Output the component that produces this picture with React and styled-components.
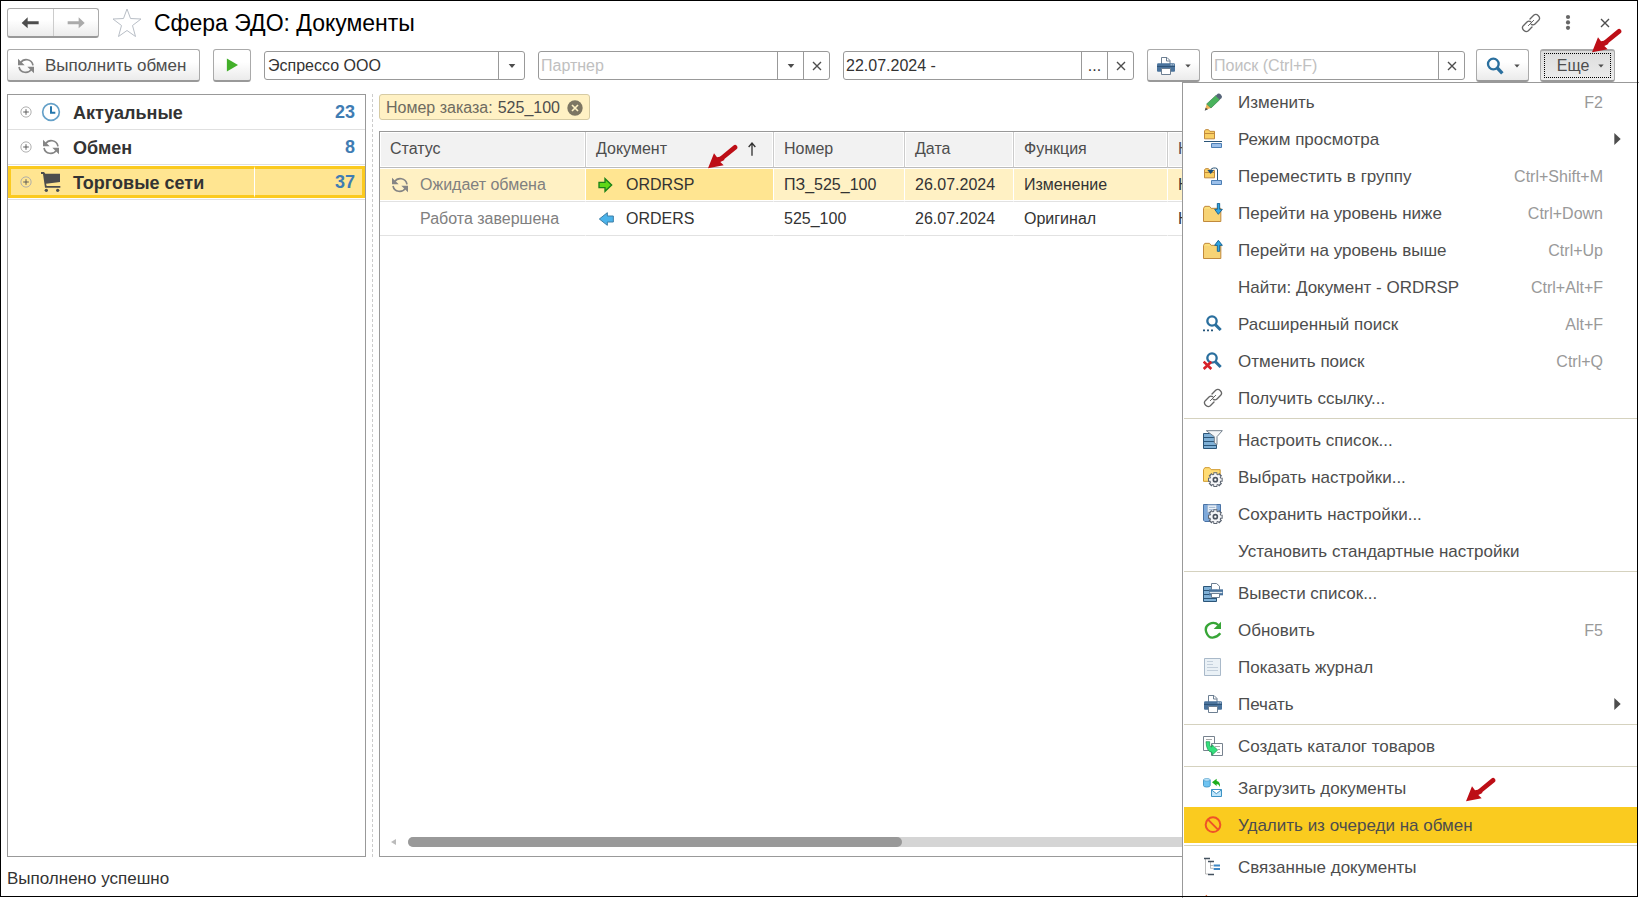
import React from 'react';
import styled, { createGlobalStyle } from 'styled-components';

const GlobalStyle = createGlobalStyle`
    * { box-sizing: border-box; }
    body {
        margin: 0;
        background: #fff;
        color: #333;
        font: 16px/20px "Liberation Sans", Arial, sans-serif;
    }
    button, input, select {
        font: inherit;
        color: inherit;
        margin: 0;
    }
    button {
        padding: 0;
        border: 0;
        background: none;
        cursor: pointer;
    }
    svg { flex-shrink: 0; }
`;

const Icon = ({ name, size = 20 }) => (
    <svg width={size} height={size} viewBox="0 0 60 60" fill="none" aria-hidden="true">
        {icons[name]}
    </svg>
);

const folder = (
    <g>
        <path d="M1.5 16l4-6h14l5 6h29v39.500H1.500z" fill="#f7d375" stroke="#c18a3c" strokeWidth="3" />
        <path d="M4 17l3-5h11l5 6z" fill="#fbe07a" />
    </g>
);
const smallFolder = (
    <path d="M4.5 6l3-4h9l4 5h14v22.500h-30zM5 13.500h29" fill="#f9cf63" stroke="#c18a3c" strokeWidth="3" />
);
const gear = (
    <g>
        <circle cx="37" cy="38" r="18" fill="#5d6571" />
        <path d="M37 16v44M15 38h44M21 22l32 32M53 22L21 54" stroke="#5d6571" strokeWidth="12" />
        <path d="M37 19v38M18 38h38M24 25l26 26M50 25L24 51" stroke="#f5f6f8" strokeWidth="7" />
        <circle cx="37" cy="38" r="15" fill="#f5f6f8" />
        <circle cx="37" cy="38" r="6" fill="#fff" stroke="#4c545f" strokeWidth="5" />
    </g>
);
const lens = (
    <g stroke="#2a6f9e">
        <circle cx="27" cy="17" r="14" strokeWidth="7" fill="#fff" />
        <path d="M37 28l16 16" strokeWidth="9" />
    </g>
);
const stack = (
    <path d="M1.5 10.500h39v45h-39zM1.500 22.500h39M1.500 34.500h39M1.500 46.500h39" fill="#7fb0d6" stroke="#2b5578" strokeWidth="3" />
);

const icons = {
    back: <path d="M5 30L23 13v12h33v9H23v12z" fill="#4d4d4d" />,
    forward: <path d="M56 30L38 13v12H5v9h33v12z" fill="#aaa" />,
    star: <path d="M30 2l7 19 21 1-17 13 6 22-17-12-17 12 6-22L2 22l21-1z" stroke="#b8bec6" strokeWidth="2" />,
    sync: (
        <g>
            <path d="M14 20C23 6 47 8 51 28M46 40C37 54 13 52 9 33" stroke="#858585" strokeWidth="5" />
            <path d="M6 8v20h20zM54 52V32H34z" fill="#858585" />
        </g>
    ),
    play: <path d="M13 8v44l37-22z" fill="#43b02a" />,
    clock: (
        <g>
            <circle cx="30" cy="30" r="25" fill="#fff" stroke="#64a0c8" strokeWidth="5" />
            <path d="M30 13v19h13" stroke="#2677ad" strokeWidth="6" />
        </g>
    ),
    cart: (
        <g fill="#4d4d4d">
            <path d="M0 0h9l4 5h44v25l-42 5 2 7h41v5H12L6 6H0z" />
            <circle cx="16" cy="55" r="5" />
            <circle cx="50" cy="55" r="5" />
        </g>
    ),
    link: (
        <g stroke="#666" strokeWidth="4" strokeLinecap="round">
            <path d="M27 18l11-11q7-6 14 1t1 14L42 33q-5 5-11 1M33 42L22 53q-7 6-14-1T7 38l11-11q5-5 11-1" />
            <path d="M22 38l16-16" strokeWidth="3" />
        </g>
    ),
    dots: (
        <g fill="#666">
            <circle cx="30" cy="10" r="7" />
            <circle cx="30" cy="28" r="7" />
            <circle cx="30" cy="46" r="7" />
        </g>
    ),
    cross: <path d="M18 18l24 24M42 18L18 42" stroke="#4d4d4d" strokeWidth="4" />,
    down: <path d="M20 24h20L30 36z" fill="#4d4d4d" />,
    right: <path d="M22 12v36l19-18z" fill="#4d4d4d" />,
    up: <path d="M30 50V12M20 24l10-12 10 12" stroke="#333" strokeWidth="4" />,
    out: <path d="M9 22h18V11l20 19-20 19V38H9z" fill="#5fd816" stroke="#198018" strokeWidth="4" />,
    in: <path d="M52 21H34V11L10 30l24 19V39h18z" fill="#4bb3ea" stroke="#3d7ea6" strokeWidth="3" />,
    close: (
        <g>
            <circle cx="30" cy="30" r="23" fill="#7d7663" />
            <path d="M21 21l18 18M39 21L21 39" stroke="#fff1c4" strokeWidth="5" />
        </g>
    ),
    expand: (
        <g stroke="#aaa" strokeWidth="4">
            <circle cx="30" cy="30" r="22" />
            <path d="M18 30h24M30 18v24" stroke="#555" />
        </g>
    ),
    lens: (
        <g stroke="#2a6f9e">
            <circle cx="25" cy="24" r="16" strokeWidth="7" />
            <path d="M37 36l15 16" strokeWidth="10" />
        </g>
    ),
    printer: (
        <g>
            <path d="M16.500 24V4.500H33l9 9V24" fill="#fff" stroke="#6d7f92" strokeWidth="3" />
            <path d="M31.500 5v10H42" stroke="#6d7f92" strokeWidth="3" />
            <path d="M3 26q0-4 4-4h46q4 0 4 4v18q0 3-3 3H6q-3 0-3-3z" fill="#4a739c" />
            <path d="M3 31.500h54" stroke="#2f5478" strokeWidth="3" />
            <path d="M16.500 37.500h27v18h-27z" fill="#fff" stroke="#6d7f92" strokeWidth="3" />
            <path d="M44 26.500h3M50 26.500h3" stroke="#fff" strokeWidth="3" />
        </g>
    ),
    pencil: (
        <g>
            <path d="M6 54l5-18 13 12z" fill="#f0b557" />
            <path d="M5 56l3-9 7 5z" fill="#4a4a4a" />
            <path d="M11 36l27-25 12 12-26 25z" fill="#49b35c" stroke="#3a7f48" strokeWidth="2" />
            <path d="M38 11l6-6q5-2 10 3t2 10l-6 5z" fill="#566478" />
        </g>
    ),
    viewMode: (
        <g>
            {smallFolder}
            <path d="M3 37.500h54" stroke="#2b5578" strokeWidth="3" />
            <path d="M25.500 43.500h30v12h-30z" fill="#9cc0ea" stroke="#4d7fb5" strokeWidth="3" />
        </g>
    ),
    move: (
        <g>
            <g transform="translate(0 6)">{smallFolder}</g>
            <path d="M43.500 44V12q0-6-6-6h-6q-7 0-9 8" stroke="#2b5578" strokeWidth="3" />
            <path d="M13 12h20L23 24z" fill="#174f7d" />
            <path d="M25.500 43.500h30v12h-30z" fill="#9cc0ea" stroke="#4d7fb5" strokeWidth="3" />
        </g>
    ),
    levelDown: (
        <g>
            {folder}
            <path d="M43 1h7v18h8L46 34 35 19h8z" fill="#2fa5e3" stroke="#1b6696" strokeWidth="3" />
        </g>
    ),
    levelUp: (
        <g>
            {folder}
            <path d="M43 34h7V16h8L46 1 35 16h8z" fill="#2fa5e3" stroke="#1b6696" strokeWidth="3" />
        </g>
    ),
    advanced: (
        <g transform="translate(0 4)">
            {lens}
            <path d="M0 45h6M12 45h6M24 45h6" stroke="#24557a" strokeWidth="5" />
        </g>
    ),
    cancelSearch: (
        <g transform="translate(0 4)">
            {lens}
            <path d="M2 28l23 22M25 28L2 50" stroke="#d6222a" strokeWidth="8" />
        </g>
    ),
    filterList: (
        <g>
            {stack}
            <path d="M10 2h48L42 20v24l-8-5V20z" fill="#f4f6f8" stroke="#76828e" strokeWidth="3" />
        </g>
    ),
    pickSettings: (
        <g>
            <path d="M1.500 8l4-6h14l5 6h27v35h-50z" fill="#ffdc74" stroke="#d19a2e" strokeWidth="3" />
            {gear}
        </g>
    ),
    saveSettings: (
        <g>
            <path d="M1.500 1.500h51v51h-47l-4-4z" fill="#7ea9da" stroke="#4a73a5" strokeWidth="3" />
            <path d="M14 3h27v22H14zM18 10h19M18 17h19" fill="#edf3fa" stroke="#9db5d0" strokeWidth="3" />
            {gear}
        </g>
    ),
    printList: (
        <g>
            {stack}
            <path d="M25.500 20V1.500h15l9 8V20" fill="#fff" stroke="#6d7f92" strokeWidth="3" />
            <path d="M18 19h42v18H18z" fill="#4a739c" />
            <path d="M20 28.500h38" stroke="#dce6ef" strokeWidth="4" />
            <path d="M25.500 31.500h24v12h-24z" fill="#fff" stroke="#6d7f92" strokeWidth="3" />
        </g>
    ),
    refresh: (
        <g>
            <path d="M46 15Q34 4 19 12T10 37t19 16 23-13" stroke="#37a537" strokeWidth="7" />
            <path d="M54 5v22H32z" fill="#37a537" />
        </g>
    ),
    journal: (
        <g>
            <path d="M4.500 4.500h48v51h-48z" fill="#eaf1f6" stroke="#a9b9c9" strokeWidth="3" />
            <path d="M12 13.500h18M12 22.500h18M12 31.500h33M12 40.500h33" stroke="#c3cfdb" strokeWidth="3" />
        </g>
    ),
    catalog: (
        <g>
            <path d="M1.500 1.500h33v42h-33z" fill="#fff" stroke="#77828e" strokeWidth="3" />
            <path d="M9 10.500h18" stroke="#aaa" strokeWidth="3" />
            <path d="M25.500 22.500h33v36h-33z" fill="#fff" stroke="#77828e" strokeWidth="3" />
            <path d="M36 31.500h15M45 40.500h6M42 49.500h9" stroke="#aaa" strokeWidth="3" />
            <path d="M9 17h11v10q1 6 7 6v-7l17 16-17 16v-9Q10 47 9 17z" fill="#35e07d" stroke="#14904a" strokeWidth="2" />
        </g>
    ),
    upload: (
        <g>
            <path d="M1.500 6v17q0 4 10 4t10-4V6z" fill="#6fc4f2" stroke="#4c9cc9" strokeWidth="3" />
            <ellipse cx="11.5" cy="5.5" rx="10" ry="4" fill="#bfe5fb" stroke="#4c9cc9" strokeWidth="2" />
            <path d="M27 13L41 2v7q11 2 10 18-3-9-10-9v6z" fill="#1cae1c" />
            <path d="M25.500 34.500h30v21h-30zM26 36l14 11 15-11" fill="#bfe5fb" stroke="#3c93c4" strokeWidth="3" />
        </g>
    ),
    forbid: (
        <g stroke="#ee5228" strokeWidth="6">
            <circle cx="30" cy="29" r="22" />
            <path d="M15 14l30 30" />
        </g>
    ),
    related: (
        <g>
            <path d="M7.500 6v45H16M22.500 14v20h9M22 25.500h9" stroke="#9a9a9a" strokeWidth="2" />
            <path d="M3 4.500h18M15 13.500h18M15 52.500h18" stroke="#44525f" strokeWidth="5" />
            <path d="M32 25.500h19M32 36h19" stroke="#3f87c4" strokeWidth="6" />
        </g>
    ),
    flame: <path d="M10 2l5 6H5z" fill="#e8622c" />,
};

const Pointer = () => (
    <svg width="30" height="25" viewBox="0 0 90 75" aria-hidden="true">
        <path d="M42 42L81 10" stroke="#bd0e16" strokeWidth="14" strokeLinecap="round" />
        <path d="M0 73l18-45 9 12 20-4 2 12-12 6 10 10z" fill="#bd0e16" />
    </svg>
);

const groups = [
    { icon: 'clock', name: 'Актуальные', count: 23 },
    { icon: 'sync', name: 'Обмен', count: 8 },
    { icon: 'cart', name: 'Торговые сети', count: 37, selected: true },
];

const rows = [
    { status: 'Ожидает обмена', statusIcon: 'sync', docIcon: 'out', doc: 'ORDRSP', number: 'ПЗ_525_100', date: '26.07.2024', func: 'Изменение', selected: true },
    { status: 'Работа завершена', docIcon: 'in', doc: 'ORDERS', number: '525_100', date: '26.07.2024', func: 'Оригинал' },
];

const menu = [
    [
        { icon: 'pencil', name: 'Изменить', keys: 'F2' },
        { icon: 'viewMode', name: 'Режим просмотра', sub: true },
        { icon: 'move', name: 'Переместить в группу', keys: 'Ctrl+Shift+M' },
        { icon: 'levelDown', name: 'Перейти на уровень ниже', keys: 'Ctrl+Down' },
        { icon: 'levelUp', name: 'Перейти на уровень выше', keys: 'Ctrl+Up' },
        { name: 'Найти: Документ - ORDRSP', keys: 'Ctrl+Alt+F' },
        { icon: 'advanced', name: 'Расширенный поиск', keys: 'Alt+F' },
        { icon: 'cancelSearch', name: 'Отменить поиск', keys: 'Ctrl+Q' },
        { icon: 'link', name: 'Получить ссылку...' },
    ],
    [
        { icon: 'filterList', name: 'Настроить список...' },
        { icon: 'pickSettings', name: 'Выбрать настройки...' },
        { icon: 'saveSettings', name: 'Сохранить настройки...' },
        { name: 'Установить стандартные настройки' },
    ],
    [
        { icon: 'printList', name: 'Вывести список...' },
        { icon: 'refresh', name: 'Обновить', keys: 'F5' },
        { icon: 'journal', name: 'Показать журнал' },
        { icon: 'printer', name: 'Печать', sub: true },
    ],
    [{ icon: 'catalog', name: 'Создать каталог товаров' }],
    [
        { icon: 'upload', name: 'Загрузить документы' },
        { icon: 'forbid', name: 'Удалить из очереди на обмен', active: true },
    ],
    [
        { icon: 'related', name: 'Связанные документы' },
        { icon: 'flame', name: '' },
    ],
];

const MoreMenu = () => (
    <Menu aria-label="Еще">
        {menu.map((items, i) => (
            <MenuGroup key={i}>
                {items.map((item) => (
                    <li key={item.name}>
                        <MenuItem $active={item.active} aria-label={item.name || 'Прочее'}>
                            <MenuIcon>{item.icon && <Icon name={item.icon} />}</MenuIcon>
                            <MenuText>{item.name}</MenuText>
                            <MenuKeys>{item.keys}</MenuKeys>
                            <MenuArrow>{item.sub && <Icon name="right" />}</MenuArrow>
                            {item.active && <MenuPointer><Pointer /></MenuPointer>}
                        </MenuItem>
                    </li>
                ))}
            </MenuGroup>
        ))}
    </Menu>
);

export default function App() {
    return (
        <Window>
            <GlobalStyle />
            <TitleBar>
                <NavButtons>
                    <button aria-label="Назад"><Icon name="back" /></button>
                    <button aria-label="Вперед"><Icon name="forward" /></button>
                </NavButtons>
                <StarButton aria-label="В избранное"><Icon name="star" size={30} /></StarButton>
                <h1>Сфера ЭДО: Документы</h1>
                <WindowButtons>
                    <button aria-label="Ссылка"><Icon name="link" /></button>
                    <button aria-label="Меню"><Icon name="dots" size={18} /></button>
                    <button aria-label="Закрыть"><Icon name="cross" /></button>
                </WindowButtons>
            </TitleBar>

            <Toolbar>
                <ExchangeButton $width={193}>
                    <Icon name="sync" />
                    Выполнить обмен
                </ExchangeButton>
                <ToolButton $width={38} aria-label="Запустить"><Icon name="play" size={18} /></ToolButton>
                <Field $width={261}>
                    <select aria-label="Организация" defaultValue="Эспрессо ООО">
                        <option>Эспрессо ООО</option>
                    </select>
                    <button aria-label="Выбрать организацию"><Icon name="down" /></button>
                </Field>
                <Field $width={292}>
                    <input placeholder="Партнер" aria-label="Партнер" />
                    <button aria-label="Выбрать партнера"><Icon name="down" /></button>
                    <button aria-label="Очистить партнера"><Icon name="cross" /></button>
                </Field>
                <Field $width={291}>
                    <input defaultValue="22.07.2024 -" aria-label="Период" />
                    <button aria-label="Выбрать период">...</button>
                    <button aria-label="Очистить период"><Icon name="cross" /></button>
                </Field>
                <SearchTools>
                    <DropButton $width={53} aria-label="Печать">
                        <Icon name="printer" />
                        <Icon name="down" size={16} />
                    </DropButton>
                    <Field $width={254}>
                        <input placeholder="Поиск (Ctrl+F)" aria-label="Поиск" />
                        <button aria-label="Очистить поиск"><Icon name="cross" /></button>
                    </Field>
                    <DropButton $width={53} aria-label="Найти">
                        <Icon name="lens" />
                        <Icon name="down" size={16} />
                    </DropButton>
                    <MoreButton $width={75}>
                        <span>Еще</span>
                        <Icon name="down" size={16} />
                        <MorePointer><Pointer /></MorePointer>
                    </MoreButton>
                </SearchTools>
            </Toolbar>

            <Body>
                <Tree>
                    {groups.map((group) => (
                        <TreeRow key={group.name} $selected={group.selected}>
                            <TreeName>
                                <button aria-label="Развернуть"><Icon name="expand" size={14} /></button>
                                <Icon name={group.icon} />
                                <TreeLabel>{group.name}</TreeLabel>
                            </TreeName>
                            <TreeCount>{group.count}</TreeCount>
                        </TreeRow>
                    ))}
                </Tree>
                <Splitter />
                <Main>
                    <Chip>
                        Номер заказа: <b>525_100</b>
                        <button aria-label="Убрать отбор"><Icon name="close" /></button>
                    </Chip>
                    <TablePanel>
                        <Table>
                            <colgroup>
                                <col width="206" />
                                <col width="188" />
                                <col width="131" />
                                <col width="109" />
                                <col width="154" />
                                <col />
                            </colgroup>
                            <thead>
                                <tr>
                                    <th>Статус</th>
                                    <th>
                                        <SortLabel>Документ <Icon name="up" /></SortLabel>
                                        <HeaderPointer><Pointer /></HeaderPointer>
                                    </th>
                                    <th>Номер</th>
                                    <th>Дата</th>
                                    <th>Функция</th>
                                    <th>НДС</th>
                                </tr>
                            </thead>
                            <tbody>
                                {rows.map((row) => (
                                    <Row key={row.doc} $selected={row.selected}>
                                        <td>
                                            <Status>
                                                <i>{row.statusIcon && <Icon name={row.statusIcon} />}</i>
                                                {row.status}
                                            </Status>
                                        </td>
                                        <DocCell $selected={row.selected}>
                                            <Doc><Icon name={row.docIcon} />{row.doc}</Doc>
                                        </DocCell>
                                        <td>{row.number}</td>
                                        <td>{row.date}</td>
                                        <td>{row.func}</td>
                                        <td>Нет</td>
                                    </Row>
                                ))}
                            </tbody>
                        </Table>
                        <ScrollBar>
                            <ScrollArrow />
                            <ScrollTrack><ScrollThumb /></ScrollTrack>
                        </ScrollBar>
                    </TablePanel>
                </Main>
            </Body>

            <StatusBar>Выполнено успешно</StatusBar>
            <MoreMenu />
        </Window>
    );
}

const Window = styled.div`
    position: relative;
    display: flex;
    flex-direction: column;
    min-height: 100vh;
    padding: 8px 8px 0 7px;
    overflow: hidden;
    &::after {
        content: "";
        position: absolute;
        inset: 0 1px 1px 0;
        border: 1px solid #000;
        pointer-events: none;
    }
`
const TitleBar = styled.header`
    display: flex;
    align-items: center;
    height: 30px;
    margin-bottom: 11px;
    h1 {
        flex-grow: 1;
        margin: 0;
        color: #000;
        font-size: 23px;
        font-weight: 400;
        line-height: 28px;
    }
`
const NavButtons = styled.div`
    display: flex;
    width: 92px;
    height: 30px;
    margin-right: 13px;
    border: 1px solid #aaa;
    border-bottom: 2px solid #999;
    border-radius: 3px;
    background: linear-gradient(#fff 40%, #ececec);
    button {
        display: flex;
        flex: 1;
        align-items: center;
        justify-content: center;
    }
    button + button {
        border-left: 1px solid #ccc;
    }
`
const StarButton = styled.button`
    display: flex;
    margin-right: 12px;
`
const WindowButtons = styled.div`
    display: flex;
    align-items: center;
    gap: 18px;
    margin-right: 16px;
    button {
        display: flex;
    }
`
const Toolbar = styled.div`
    display: flex;
    align-items: center;
    gap: 13px;
    height: 33px;
    margin: 0 16px 12px 0;
`
const SearchTools = styled.div`
    display: flex;
    flex: 1 1 468px;
    align-items: center;
    gap: 11px;
`
const ToolButton = styled.button`
    display: flex;
    flex: 0 0 ${props => props.$width}px;
    align-items: center;
    justify-content: center;
    height: 33px;
    border: 1px solid #aaa;
    border-bottom: 2px solid #999;
    border-radius: 3px;
    background: linear-gradient(#fff 40%, #ebebeb);
    color: #4d4d4d;
    white-space: nowrap;
`
const ExchangeButton = styled(ToolButton)`
    justify-content: flex-start;
    gap: 9px;
    padding: 2px 0 0 8px;
    font-size: 17px;
`
const DropButton = styled(ToolButton)`
    gap: 4px;
    padding: 2px 0 0 5px;
`
const MoreButton = styled(ToolButton)`
    position: relative;
    gap: 4px;
    padding-left: 11px;
    border-top-width: 2px;
    background: linear-gradient(#dcdcdc, #ececec);
    &::before {
        content: "";
        position: absolute;
        inset: 2px 3px;
        border: 1px dotted #000;
    }
`
const MorePointer = styled.span`
    position: absolute;
    top: -23px;
    right: -8px;
    z-index: 2;
`
const Field = styled.div`
    display: flex;
    flex: 1 1 ${props => props.$width}px;
    min-width: 0;
    height: 29px;
    border: 1px solid #999;
    border-radius: 3px;
    background: #fff;
    input, select {
        flex: 1;
        min-width: 0;
        padding: 0 3px;
        border: 0;
        outline: 0;
        background: none;
        appearance: none;
    }
    input {
        padding: 0 2px;
    }
    input::placeholder {
        color: #c0c0c0;
        opacity: 1;
    }
    button {
        display: flex;
        flex: 0 0 26px;
        align-items: center;
        justify-content: center;
        border-left: 1px solid #999;
    }
`
const Body = styled.main`
    display: flex;
    flex-grow: 1;
`
const Tree = styled.ul`
    flex: 0 0 359px;
    margin: 0;
    padding: 0;
    border: 1px solid #999;
    list-style: none;
`
const TreeRow = styled.li`
    display: flex;
    height: 35px;
    border-bottom: 1px solid #e0e0e0;
    font-size: 18px;
    font-weight: 700;
    ${props => props.$selected && `
        padding: 1px 0;
        > * { background: #ffe591; border: solid #fbca1f; border-width: 3px 0; }
        > :first-child { border-left-width: 3px; padding-left: 8px; border-right: 1px solid #fff; }
        > :last-child { border-right-width: 3px; padding-right: 7px; }
    `}
`
const TreeName = styled.div`
    display: flex;
    flex: 0 0 247px;
    align-items: center;
    gap: 12px;
    padding-left: 11px;
    button {
        display: flex;
        margin-right: -4px;
    }
`
const TreeLabel = styled.span`
    padding-top: 1px;
`
const TreeCount = styled.div`
    display: flex;
    flex-grow: 1;
    align-items: center;
    justify-content: flex-end;
    padding-right: 10px;
    color: #3f7cb3;
`
const Splitter = styled.div`
    margin: 0 6px;
    border-left: 1px dashed #ccc;
`
const Main = styled.div`
    display: flex;
    flex: 1;
    flex-direction: column;
    align-items: flex-start;
    min-width: 0;
`
const Chip = styled.div`
    display: flex;
    align-items: center;
    gap: 5px;
    height: 26px;
    margin-bottom: 11px;
    padding: 1px 4px 0 6px;
    border: 1px solid #d6cba4;
    border-radius: 3px;
    background: #fff1c4;
    color: #6e6b60;
    b {
        color: #4d4d4d;
        font-weight: 400;
    }
    button {
        display: flex;
    }
`
const TablePanel = styled.div`
    display: flex;
    flex-grow: 1;
    flex-direction: column;
    justify-content: space-between;
    width: 100%;
    border: 1px solid #999;
`
const Table = styled.table`
    width: 100%;
    border-collapse: separate;
    border-spacing: 0;
    table-layout: fixed;
    th, td {
        padding: 0 0 0 10px;
        text-align: left;
        font-weight: 400;
        white-space: nowrap;
    }
    th {
        position: relative;
        height: 36px;
        padding-bottom: 2px;
        border-right: 1px solid #ccc;
        border-bottom: 1px solid #bbb;
        background: #f2f2f2;
        box-shadow: inset 0 0 0 1px #fff;
        color: #4d4d4d;
    }
`
const Row = styled.tr`
    td {
        height: 34px;
        border-right: 1px solid #fff;
        border-bottom: 1px solid #e2e2e2;
        background: ${props => props.$selected ? '#fff1c4' : '#fff'};
        box-shadow: inset 0 1px #fff, inset 0 -1px #fff;
    }
`
const DocCell = styled.td`
    && {
        ${props => props.$selected && 'background: #ffe591;'}
    }
`
const SortLabel = styled.div`
    display: flex;
    align-items: center;
    justify-content: space-between;
    padding-right: 11px;
`
const HeaderPointer = styled.div`
    position: absolute;
    right: 35px;
    bottom: -2px;
    z-index: 1;
    display: flex;
`
const Status = styled.div`
    display: flex;
    align-items: center;
    gap: 10px;
    color: #808080;
    i {
        display: flex;
        width: 20px;
    }
`
const Doc = styled.div`
    display: flex;
    align-items: center;
    gap: 10px;
`
const ScrollBar = styled.div`
    display: flex;
    align-items: center;
    gap: 12px;
    margin-bottom: 9px;
    padding: 0 16px 0 11px;
`
const ScrollArrow = styled.div`
    border: 3px solid transparent;
    border-left: 0;
    border-right: 5px solid #bbb;
`
const ScrollTrack = styled.div`
    flex: 1;
    height: 10px;
    border-radius: 5px;
    background: #d5d5d5;
`
const ScrollThumb = styled.div`
    width: 41%;
    height: 10px;
    border-radius: 5px;
    background: #999;
`
const StatusBar = styled.footer`
    height: 41px;
    padding-top: 12px;
    font-size: 17px;
`
const Menu = styled.nav`
    position: absolute;
    top: 82px;
    right: 0;
    bottom: 0;
    width: 457px;
    padding: 1px 2px 0 1px;
    overflow: hidden;
    border: solid #999;
    border-width: 1px 0 0 1px;
    background: #fff;
`
const MenuGroup = styled.ul`
    margin: 0;
    padding: 0 0 1px;
    list-style: none;
    & + & {
        padding-top: 3px;
        border-top: 1px solid #d5d2bf;
    }
    li {
        padding-bottom: 1px;
    }
`
const MenuItem = styled.button`
    position: relative;
    display: flex;
    align-items: center;
    width: 100%;
    height: 36px;
    padding: 0 10px 0 19px;
    background: ${props => props.$active ? '#facb1f' : 'none'};
    color: #4d4d4d;
    text-align: left;
`
const MenuIcon = styled.span`
    display: flex;
    flex: 0 0 35px;
`
const MenuText = styled.span`
    flex-grow: 1;
    padding-top: 2px;
    font-size: 17px;
`
const MenuKeys = styled.span`
    padding-top: 2px;
    color: #999;
`
const MenuArrow = styled.span`
    display: flex;
    flex: 0 0 24px;
    justify-content: flex-end;
`
const MenuPointer = styled.span`
    position: absolute;
    top: -30px;
    left: 282px;
`
